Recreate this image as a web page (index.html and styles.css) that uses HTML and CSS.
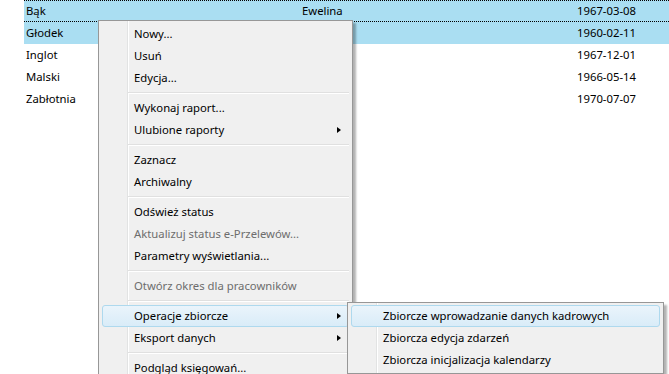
FILE: index.html
```html
<!DOCTYPE html>
<html lang="pl">
<head>
  <meta charset="UTF-8">
  <title>Pracownicy</title>
  <link rel="stylesheet" href="styles.css">
</head>
<body>

  <!-- lista pracownikow -->
  <div class="grid">
    <div class="row selected focus"><span>Bąk</span><span>Ewelina</span><span>1967-03-08</span></div>
    <div class="row selected"><span>Głodek</span><span>Anna</span><span>1960-02-11</span></div>
    <div class="row"><span>Inglot</span><span>Marek</span><span>1967-12-01</span></div>
    <div class="row"><span>Malski</span><span>Grzegorz</span><span>1966-05-14</span></div>
    <div class="row"><span>Zabłotnia</span><span>Halina</span><span>1970-07-07</span></div>
  </div>

  <!-- menu kontekstowe -->
  <div class="menu main-menu">
    <div class="item">Nowy...</div>
    <div class="item">Usuń</div>
    <div class="item">Edycja...</div>
    <div class="sep"></div>
    <div class="item">Wykonaj raport...</div>
    <div class="item sub">Ulubione raporty</div>
    <div class="sep"></div>
    <div class="item">Zaznacz</div>
    <div class="item">Archiwalny</div>
    <div class="sep"></div>
    <div class="item">Odśwież status</div>
    <div class="item disabled">Aktualizuj status e-Przelewów...</div>
    <div class="item">Parametry wyświetlania...</div>
    <div class="sep"></div>
    <div class="item disabled">Otwórz okres dla pracowników</div>
    <div class="sep"></div>
    <div class="item sub hover">Operacje zbiorcze</div>
    <div class="item sub">Eksport danych</div>
    <div class="sep"></div>
    <div class="item">Podgląd księgowań...</div>

    <div class="menu submenu">
      <div class="item hover">Zbiorcze wprowadzanie danych kadrowych</div>
      <div class="item">Zbiorcza edycja zdarzeń</div>
      <div class="item">Zbiorcza inicjalizacja kalendarzy</div>
    </div>
  </div>

</body>
</html>
```

FILE: styles.css
```css
html, body {
  margin: 0;
  padding: 0;
  height: 100%;
  overflow: hidden;
}
body {
  font-family: "Noto Sans", "Open Sans", sans-serif;
  font-size: 11.3px;
  color: #000;
  background: #fff;
  position: relative;
}
.grid {
  margin-left: 24px;
}
.row {
  display: grid;
  grid-template-columns: 278px 275px 1fr;
  height: 22px;
  line-height: 22px;
  box-sizing: border-box;
}
.row span:first-child {
  padding-left: 2px;
}
.selected {
  background: #aadef2;
}
.focus {
  border-top: 1px dotted #000;
  border-bottom: 1px dotted #000;
  line-height: 20px;
}
.menu {
  position: absolute;
  background: #f0f0f0;
  border: 1px solid #979797;
  padding: 2px 3px;
  box-shadow: 3px 3px 2px rgba(0, 0, 0, 0.3);
}
.menu::before {
  content: "";
  position: absolute;
  top: 0;
  bottom: 0;
  left: 28px;
  width: 1px;
  background: #e2e3e3;
  border-right: 1px solid #fff;
}
.main-menu {
  left: 98px;
  top: 20px;
  width: 247px;
}
.submenu {
  left: 248px;
  top: 281px;
  width: 309px;
}
.item {
  position: relative;
  height: 22px;
  padding-left: 31px;
  white-space: nowrap;
  box-sizing: border-box;
  border: 1px solid transparent;
  border-radius: 3px;
  line-height: 20px;
}
.disabled {
  color: #6d6d6d;
}
.hover {
  background: linear-gradient(#eaf4fb, #d9ecf8);
  border-color: #aed9ee;
}
.sub::after {
  content: "";
  position: absolute;
  right: 7px;
  top: 7px;
  border-left: 4px solid #000;
  border-top: 3.5px solid transparent;
  border-bottom: 3.5px solid transparent;
}
.sep {
  height: 8px;
  position: relative;
}
.sep::before {
  content: "";
  position: absolute;
  left: 26px;
  right: 0;
  top: 3px;
  height: 1px;
  background: #e0e0e0;
  border-bottom: 1px solid #fff;
}
```
